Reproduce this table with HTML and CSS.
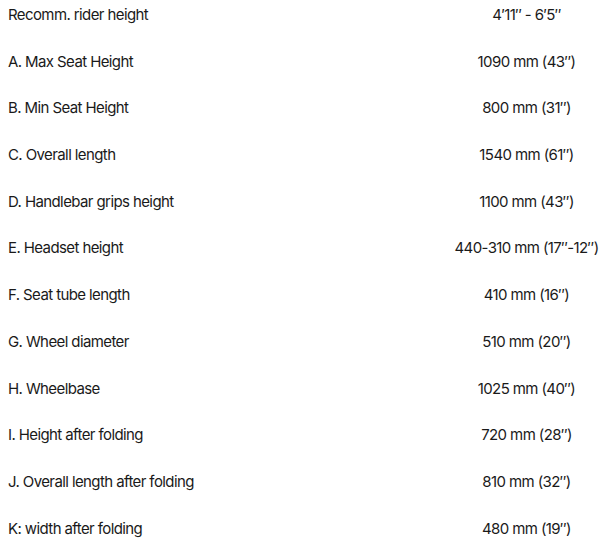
FILE: index.html
```html
<!DOCTYPE html>
<html>
<head>
<meta charset="utf-8">
<link rel="stylesheet" href="styles.css">
</head>
<body>
<table class="specs">
<tbody>
<tr><td class="label">Recomm. rider height</td><td class="value">4′11″ - 6′5″</td></tr>
<tr><td class="label">A. Max Seat Height</td><td class="value">1090 mm (43″)</td></tr>
<tr><td class="label">B. Min Seat Height</td><td class="value">800 mm (31″)</td></tr>
<tr><td class="label">C. Overall length</td><td class="value">1540 mm (61″)</td></tr>
<tr><td class="label">D. Handlebar grips height</td><td class="value">1100 mm (43″)</td></tr>
<tr><td class="label">E. Headset height</td><td class="value">440-310 mm (17″-12″)</td></tr>
<tr><td class="label">F. Seat tube length</td><td class="value">410 mm (16″)</td></tr>
<tr><td class="label">G. Wheel diameter</td><td class="value">510 mm (20″)</td></tr>
<tr><td class="label">H. Wheelbase</td><td class="value">1025 mm (40″)</td></tr>
<tr><td class="label">I. Height after folding</td><td class="value">720 mm (28″)</td></tr>
<tr><td class="label">J. Overall length after folding</td><td class="value">810 mm (32″)</td></tr>
<tr><td class="label">K: width after folding</td><td class="value">480 mm (19″)</td></tr>
</tbody>
</table>
</body>
</html>
```

FILE: styles.css
```css
html, body {
  margin: 0;
  padding: 0;
  background: #ffffff;
}
body {
  font-family: Inter, "Noto Sans", sans-serif;
  font-size: 15px;
  letter-spacing: -0.6px;
  color: #1a1a1a;
  padding-top: 4px;
}
.specs {
  border-collapse: collapse;
  width: 605px;
  table-layout: fixed;
}
.specs td {
  padding: 0;
  height: 46.7px;
  line-height: 22px;
  vertical-align: top;
  white-space: nowrap;
}
.label {
  width: 448px;
  padding-left: 8px !important;
  box-sizing: border-box;
}
.value {
  text-align: center;
}
```
